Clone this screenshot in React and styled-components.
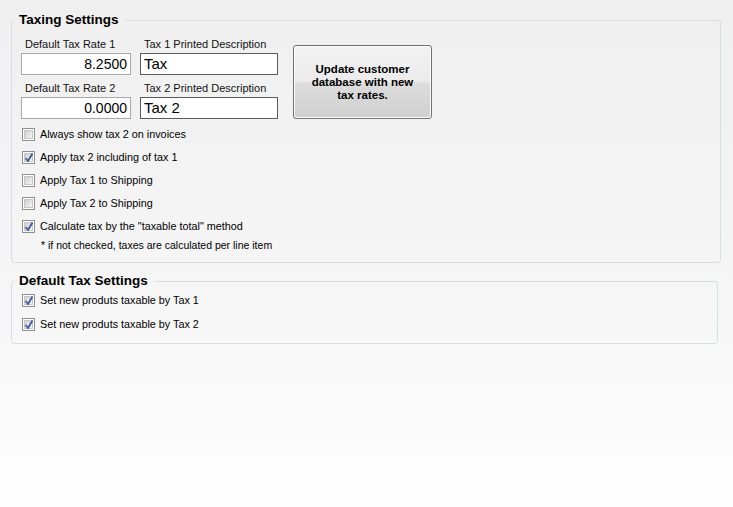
import React from 'react';
import styled, { createGlobalStyle } from 'styled-components';

const GlobalStyle = createGlobalStyle`
  html, body {
    margin: 0;
    padding: 0;
  }
  body {
    font-family: "Liberation Sans", Arial, sans-serif;
    color: #000;
  }
`;

const Page = styled.div`
  width: 733px;
  height: 507px;
  box-sizing: border-box;
  padding: 12px 12px 0 11px;
  background: linear-gradient(to bottom, #efefef 0%, #f6f6f6 60%, #fefefe 100%);
  display: flex;
  flex-direction: column;
  gap: 10px;
`;

const Group = styled.fieldset`
  margin: 0;
  width: ${(p) => p.$width}px;
  box-sizing: border-box;
  border: 1px solid #d5dfe5;
  border-radius: 3px;
  padding: ${(p) => p.$pad};
  min-width: 0;
`;

const Legend = styled.legend`
  font-weight: bold;
  font-size: 13.5px;
  line-height: 16px;
  padding: 0 6px 0 4px;
  margin-left: -6px;
`;

const TopRow = styled.div`
  display: flex;
  align-items: flex-start;
  gap: 15px;
`;

const Fields = styled.div`
  display: grid;
  grid-template-columns: 110px 138px;
  column-gap: 9px;
`;

const Field = styled.label`
  display: flex;
  flex-direction: column;
  margin-top: ${(p) => (p.$first ? 0 : 6)}px;
`;

const Caption = styled.span`
  font-size: 11px;
  line-height: 14px;
  padding-left: 4px;
  margin-bottom: 2px;
  color: #111;
`;

const TextBox = styled.div`
  height: 22px;
  box-sizing: border-box;
  background: #fff;
  border: 1px solid ${(p) => (p.$dark ? '#5a5a5a' : '#a9a9a9')};
  font-size: ${(p) => (p.$dark ? 15 : 14)}px;
  line-height: 20px;
  padding: 0 3px;
  text-align: ${(p) => (p.$right ? 'right' : 'left')};
  white-space: nowrap;
`;

const UpdateButton = styled.button`
  margin-top: 8px;
  width: 139px;
  height: 74px;
  border: 1px solid #707070;
  border-radius: 3px;
  background: linear-gradient(to bottom, #f2f2f2 0%, #ebebeb 50%, #dddddd 51%, #cfcfcf 100%);
  box-shadow: inset 0 0 0 1px #fcfcfc;
  font-family: "Liberation Sans", Arial, sans-serif;
  font-weight: bold;
  font-size: 11.5px;
  line-height: 13px;
  color: #000;
  padding: 0 14px;
  cursor: pointer;
`;

const Checks = styled.div`
  display: flex;
  flex-direction: column;
  gap: ${(p) => p.$gap}px;
  margin-top: ${(p) => p.$top}px;
`;

const CheckRow = styled.label`
  display: flex;
  align-items: center;
  gap: 5px;
  height: 14px;
  padding-left: 1px;
  font-size: 10.8px;
`;

const Box = styled.span`
  width: 13px;
  height: 13px;
  box-sizing: border-box;
  border: 1px solid #8e8f8f;
  background: #fff;
  display: flex;
  align-items: center;
  justify-content: center;
  flex-shrink: 0;
`;

const BoxInner = styled.span`
  width: 9px;
  height: 9px;
  box-sizing: border-box;
  border: 1px solid #c6c6c6;
  background: linear-gradient(135deg, #d0d0d0 0%, #e6e6e6 60%, #f6f6f6 100%);
  position: relative;
  display: flex;
  align-items: center;
  justify-content: center;
`;

const Tick = styled.svg`
  position: absolute;
  left: -1px;
  top: -2px;
`;

const Note = styled.div`
  font-size: 10.5px;
  line-height: 13px;
  padding-left: 20px;
  margin-top: -3px;
`;

const Check = ({ checked, children }) => (
  <CheckRow>
    <Box>
      <BoxInner>
        {checked && (
          <Tick width="10" height="11" viewBox="0 0 10 11">
            <path d="M1.5 6 L4 9 L8.5 1.5" fill="none" stroke="#3c59a6" strokeWidth="1.8" />
          </Tick>
        )}
      </BoxInner>
    </Box>
    {children}
  </CheckRow>
);

const App = () => {
  return (
    <Page>
      <GlobalStyle />
      <Group $width={710} $pad="9px 9px 10px 9px">
        <Legend>Taxing Settings</Legend>
        <TopRow>
          <Fields>
            <Field $first>
              <Caption>Default Tax Rate 1</Caption>
              <TextBox $right>8.2500</TextBox>
            </Field>
            <Field $first>
              <Caption>Tax 1 Printed Description</Caption>
              <TextBox $dark>Tax</TextBox>
            </Field>
            <Field>
              <Caption>Default Tax Rate 2</Caption>
              <TextBox $right>0.0000</TextBox>
            </Field>
            <Field>
              <Caption>Tax 2 Printed Description</Caption>
              <TextBox $dark>Tax 2</TextBox>
            </Field>
          </Fields>
          <UpdateButton>Update customer database with new tax rates.</UpdateButton>
        </TopRow>
        <Checks $gap={9} $top={8}>
          <Check>Always show tax 2 on invoices</Check>
          <Check checked>Apply tax 2 including of tax 1</Check>
          <Check>Apply Tax 1 to Shipping</Check>
          <Check>Apply Tax 2 to Shipping</Check>
          <Check checked>Calculate tax by the "taxable total" method</Check>
          <Note>* if not checked, taxes are calculated per line item</Note>
        </Checks>
      </Group>
      <Group $width={707} $pad="4px 9px 12px 9px">
        <Legend>Default Tax Settings</Legend>
        <Checks $gap={10} $top={0}>
          <Check checked>Set new produts taxable by Tax 1</Check>
          <Check checked>Set new produts taxable by Tax 2</Check>
        </Checks>
      </Group>
    </Page>
  );
};

export default App;
